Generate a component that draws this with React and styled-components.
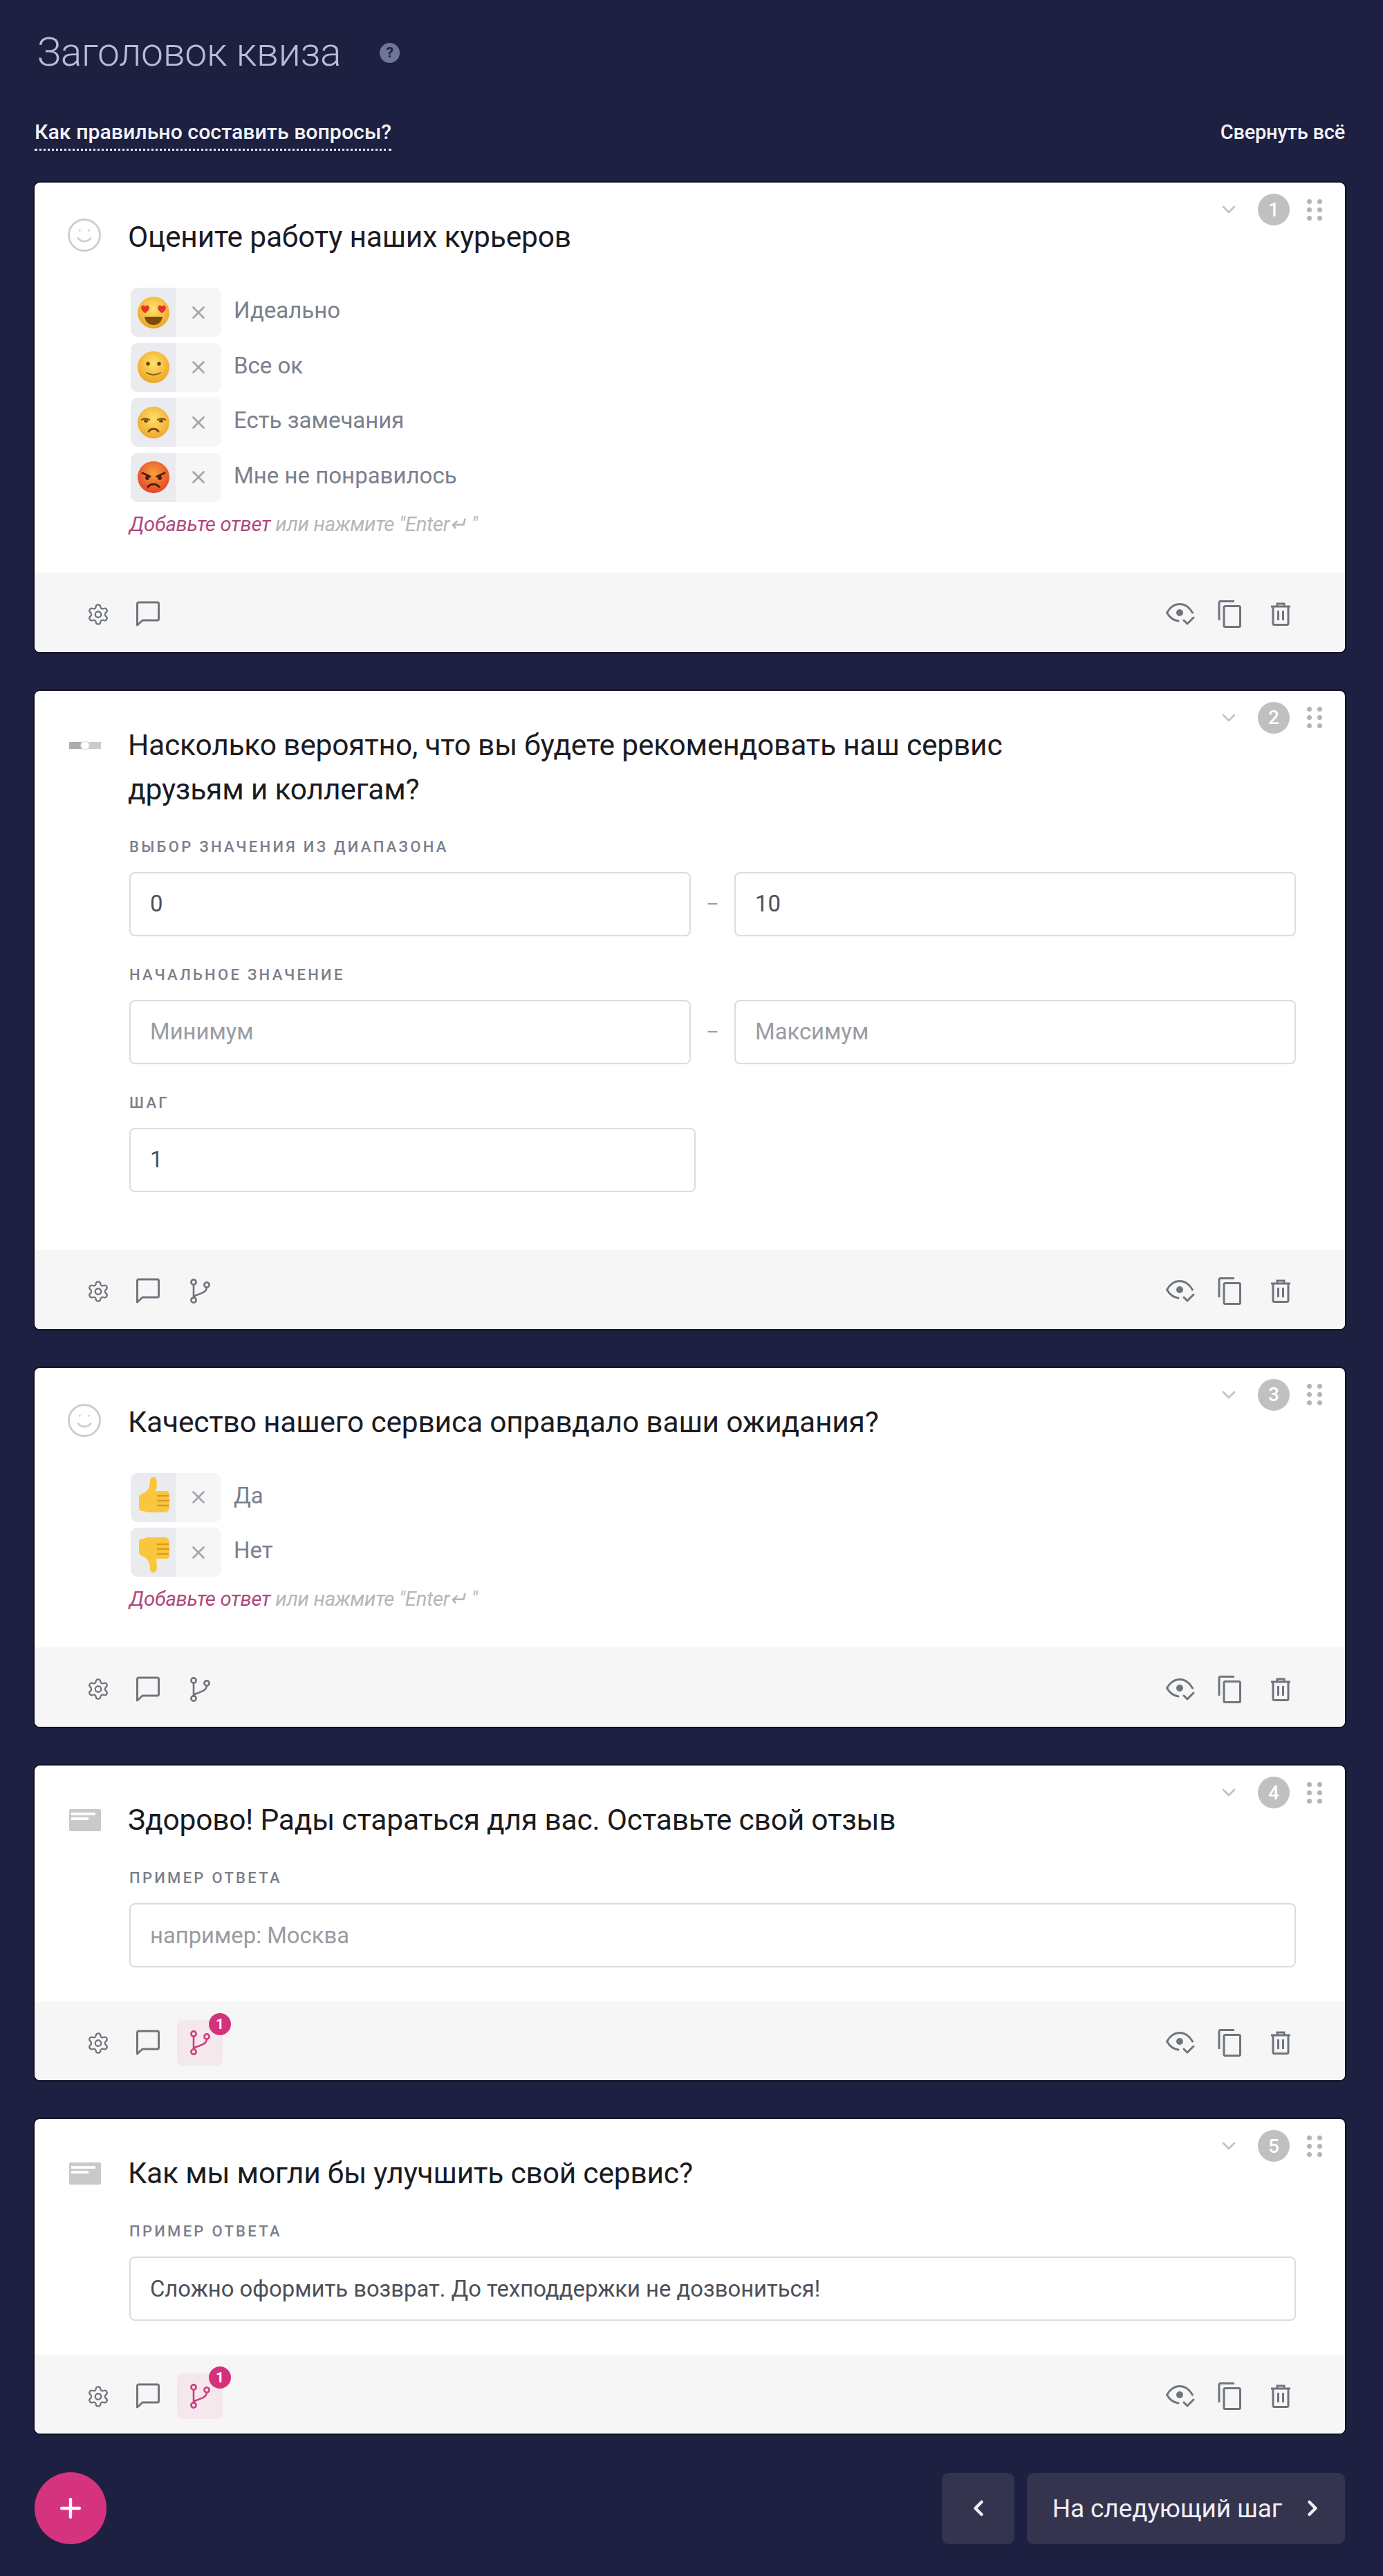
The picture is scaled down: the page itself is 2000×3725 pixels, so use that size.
import React from "react";
import styled, { createGlobalStyle } from "styled-components";
import { Settings, Smile, X, ChevronDown, ChevronLeft, ChevronRight, Plus } from "lucide-react";

const Global = createGlobalStyle`
  html, body { margin: 0; padding: 0; background: #1e2041; }
  * { box-sizing: border-box; }
  body { font-family: Roboto, "Liberation Sans", sans-serif; }
`;

const Page = styled.div`
  width: 2000px; min-height: 3725px; background: #1e2041;
  padding: 44px 55px 45px 50px;
`;
const TitleRow = styled.div`display: flex; align-items: center; height: 64px; padding-left: 4px;`;
const PageTitle = styled.h1`
  margin: 0; font-size: 57px; font-weight: 300; line-height: 64px; color: #b9bcd6; letter-spacing: -0.3px;
`;
const Help = styled.span`
  margin-left: 56px; width: 29px; height: 29px; border-radius: 50%; background: #6f7596; color: #1e2041;
  display: flex; align-items: center; justify-content: center; font-size: 21px; font-weight: 700;
`;
const LinksRow = styled.div`
  display: flex; justify-content: space-between; align-items: flex-start; margin-top: 65px; height: 91px;
`;
const DocLink = styled.a`
  font-size: 30.300px; line-height: 36px; height: 45px; font-weight: 500; color: #f2f2f8; letter-spacing: 0;
  border-bottom: 3px dotted #e6e6ee;
`;
const Collapse = styled.a`
  font-size: 29px; line-height: 36px; font-weight: 500; color: #f2f2f8; letter-spacing: -0.2px;
`;
const Card = styled.section`
  position: relative; background: #fff; border-radius: 8px; margin-bottom: 56px; overflow: visible;
  box-shadow: 0 0 0 2px #0f1024, inset 0 -2px 0 #d9dbe6;
`;
const Controls = styled.div`
  position: absolute; top: 0; right: 0; height: 78px; width: 200px; color: #c2c2c2;
  display: flex; align-items: center; justify-content: flex-end; padding: 0 33px 0 0;
`;
const Num = styled.span`
  width: 46px; height: 46px; border-radius: 50%; background: #c0c0c0; color: #fff; margin: 0 25px 0 26px;
  display: flex; align-items: center; justify-content: center; font-size: 28px; font-weight: 500;
`;
const Dots = styled.span`display: grid; grid-template-columns: 7px 7px; gap: 5px 8px;`;
const Dot = styled.i`width: 7px; height: 7px; border-radius: 50%; background: #b5b5b5;`;
const Body = styled.div`padding: 47px 50px ${p => p.$bottom}px 50px;`;
const Question = styled.div`display: flex; align-items: flex-start;`;
const TypeIcon = styled.span`
  width: 50px; height: 64px; margin-right: 35px; flex: none; display: flex; align-items: center; color: #cfcfcf;
`;
const SmileIcon = styled(Smile)`margin: -6px 0 0 -5px; flex: none; color: #cdcdcd;`;
const QuestionText = styled.h2`
  margin: 0; max-width: 1300px; font-size: 42.5px; line-height: 64px; font-weight: 400; color: #1b1b22; letter-spacing: -0.2px;
`;
const Answers = styled.div`margin: 41px 0 0 89px; display: flex; flex-direction: column; gap: 8.5px;`;
const Answer = styled.div`display: flex; align-items: center;`;
const EmojiCell = styled.span`
  width: 65px; height: 71px; background: #e9ebee; border-radius: 10px 0 0 10px;
  display: flex; align-items: center; justify-content: center;
`;
const RemoveCell = styled.span`
  width: 66px; height: 71px; background: #f6f6f7; border-radius: 0 10px 10px 0; color: #a4a6ad;
  display: flex; align-items: center; justify-content: center;
`;
const AnswerText = styled.span`margin: 0 0 5px 18px; font-size: 33px; line-height: 40px; color: #7c808c;`;
const Hint = styled.div`
  margin: 12px 0 0 87px; font-size: 29.300px; line-height: 40px; font-style: italic; color: #b5b6ba; letter-spacing: -0.3px;
`;
const Add = styled.span`color: #b0487c;`;
const Label = styled.div`
  font-size: 22px; line-height: 30px; font-weight: 500; letter-spacing: 3.3px; color: #7b7f8c; text-transform: uppercase;
  margin: ${p => p.$top}px 0 21px 0;
`;
const Fields = styled.div`margin-left: 87px; padding-right: ${p => p.$right}px;`;
const InputRow = styled.div`display: flex; align-items: center;`;
const Input = styled.div`
  flex: ${p => p.$w ? `0 0 ${p.$w}px` : "1 1 0"}; height: 93px; border: 2px solid #dcdcdc; border-radius: 8px; background: #fff;
  padding: 0 28px; display: flex; align-items: center; font-size: 32.800px; color: ${p => p.$ph ? "#9a9ca3" : "#4d4f59"};
`;
const Dash = styled.span`width: 63px; flex: none; text-align: center; font-size: 28px; color: #9a9ca3;`;
const Footer = styled.footer`
  height: ${p => p.$h}px; background: #f6f6f7; border-radius: 0 0 8px 8px;
  display: flex; align-items: center; justify-content: space-between; padding: 6px 78px 0 75px; color: #6f747e;
`;
const Group = styled.div`display: flex; align-items: center;`;
const Tool = styled.span`
  position: relative; width: ${p => p.$w}px; height: 66px; border-radius: 8px; display: flex; align-items: center; justify-content: center;
  margin-right: ${p => p.$gap || 0}px;
  color: ${p => p.$active ? "#d23c7e" : "inherit"}; background: ${p => p.$active ? "#f4e8ed" : "transparent"};
`;
const Badge = styled.span`
  position: absolute; top: -10px; right: -12px; width: 32px; height: 32px; border-radius: 50%; background: #d5317b; color: #fff;
  display: flex; align-items: center; justify-content: center; font-size: 21px; font-weight: 700;
`;
const Bottom = styled.div`display: flex; align-items: center; justify-content: space-between;`;
const Fab = styled.button`
  width: 104px; height: 104px; border: 0; border-radius: 50%; background: #d6337f; color: #fff; padding: 0;
  display: flex; align-items: center; justify-content: center;
`;
const Nav = styled.div`display: flex; gap: 18px;`;
const NavButton = styled.button`
  height: 103px; width: ${p => p.$w}px; border: 0; border-radius: 10px; background: #35344f; color: #eeeef4;
  padding: 0 0 0 ${p => p.$pad || 0}px;
  display: flex; align-items: center; justify-content: center; gap: 26px; font: 400 37px Roboto, sans-serif; letter-spacing: -0.1px;
`;

const Comment = () => (
  <svg width="36" height="38" viewBox="0 0 36 38" fill="none" stroke="currentColor" strokeWidth="3" strokeLinejoin="round">
    <path d="M2.5 35V4a2 2 0 0 1 2-2h27a2 2 0 0 1 2 2v22a2 2 0 0 1-2 2H10z" />
  </svg>
);
const Branch = () => (
  <svg width="30" height="36" viewBox="0 0 30 36" fill="none" stroke="currentColor" strokeWidth="2.600">
    <circle cx="6" cy="5" r="3.600" />
    <circle cx="6" cy="31" r="3.600" />
    <circle cx="25" cy="9" r="3.600" />
    <path d="M6 8.600v18.800M25 12.600c0 6-5 8-10 9.500-5 1.500-9 2.500-9 5.300" />
  </svg>
);
const EyeCheck = () => (
  <svg width="42" height="34" viewBox="0 0 42 34" fill="none" stroke="currentColor" strokeWidth="3" strokeLinecap="round" strokeLinejoin="round">
    <path d="M18 27C10 26 5 21 1.500 15 6 7 12 2.500 20 2.500S34 7 38.500 15" />
    <circle cx="20" cy="15" r="5" fill="currentColor" stroke="none" />
    <path d="M26 26l5 5 9-9" />
  </svg>
);
const Copy = () => (
  <svg width="34" height="40" viewBox="0 0 34 40" fill="none" stroke="currentColor" strokeWidth="3" strokeLinejoin="round">
    <path d="M2 29V3.500a2 2 0 0 1 2-2h20" />
    <rect x="9" y="8.500" width="23.500" height="30" rx="2" />
  </svg>
);
const Trash = () => (
  <svg width="30" height="34" viewBox="0 0 30 34" fill="none" stroke="currentColor" strokeWidth="3">
    <path d="M1 6h28M10 5V2h10v3" />
    <path d="M4 6v24.500a2 2 0 0 0 2 2h18a2 2 0 0 0 2-2V6" />
    <path d="M11.500 12v14M18.500 12v14" />
  </svg>
);
const CardIcon = () => (
  <svg width="46" height="32" viewBox="0 0 46 32">
    <rect width="46" height="32" rx="2" fill="#c9c9c9" />
    <rect x="3" y="5" width="35" height="4" fill="#fff" />
    <rect x="3" y="12" width="25" height="4" fill="#fff" />
  </svg>
);
const RangeIcon = () => (
  <svg width="46" height="16" viewBox="0 0 46 16">
    <rect y="3" width="18" height="10" fill="#adadad" />
    <rect x="28" y="3" width="18" height="10" fill="#cbcbcb" />
    <circle cx="23" cy="8" r="6" fill="#fff" stroke="#e2e2e2" strokeWidth="1.500" />
  </svg>
);

const Face = ({ id, from = "#ffe36e", to = "#eea422", children }) => (
  <svg width="50" height="50" viewBox="0 0 50 50">
    <defs>
      <radialGradient id={id} cx="50%" cy="38%" r="62%">
        <stop offset="0%" stopColor={from} />
        <stop offset="100%" stopColor={to} />
      </radialGradient>
    </defs>
    <circle cx="25" cy="25" r="23" fill={`url(#${id})`} />
    {children}
  </svg>
);
const Heart = ({ x }) => (
  <path transform={`translate(${x} 14)`} d="M6 12C1 8-1 5 .5 2.500 2-.5 5 0 6 2.500 7 0 10-.5 11.500 2.500 13 5 11 8 6 12z" fill="#e8322f" />
);
const emojis = {
  love: (
    <Face id="e-love"><Heart x={7} /><Heart x={31} />
      <path d="M12 31h26c-1 8-7 12-13 12s-12-4-13-12z" fill="#7a4a12" /></Face>
  ),
  smile: (
    <Face id="e-smile"><circle cx="17" cy="20" r="2.700" fill="#5d4208" /><circle cx="33" cy="20" r="2.700" fill="#5d4208" />
      <path d="M15 33c6 4 14 4 20 0" fill="none" stroke="#8a6310" strokeWidth="2" strokeLinecap="round" /></Face>
  ),
  meh: (
    <Face id="e-meh" from="#ffdf6a" to="#f0a62b">
      <path d="M8 21c3-2 7-2 11 0M31 21c4-2 8-2 11 0" fill="none" stroke="#7c5712" strokeWidth="2.500" strokeLinecap="round" />
      <ellipse cx="14" cy="23" rx="3" ry="1.800" fill="#5a3f0d" /><ellipse cx="36" cy="23" rx="3" ry="1.800" fill="#5a3f0d" />
      <path d="M18 38c3-5 11-5 14 0" fill="none" stroke="#7c4a12" strokeWidth="3" strokeLinecap="round" /></Face>
  ),
  angry: (
    <Face id="e-angry" from="#f8a03c" to="#e2442a">
      <path d="M9 19l11 5M41 19l-11 5" stroke="#4e1c10" strokeWidth="3" strokeLinecap="round" />
      <circle cx="16" cy="26" r="3" fill="#4e1c10" /><circle cx="34" cy="26" r="3" fill="#4e1c10" />
      <path d="M17 39c4-5 12-5 16 0" fill="none" stroke="#4e1c10" strokeWidth="3" strokeLinecap="round" /></Face>
  ),
  up: (
    <svg width="48" height="58" viewBox="0 0 48 58">
      <path d="M3 30c0-4 3-6 7-7 6-3 9-10 9-17 0-4 2-6 5-6 4 0 5 5 5 9 0 5-1 8-2 11h14c4 0 6 2 6 5v18c0 5-3 8-8 8H17c-3 0-5-1-7-2H8c-3 0-5-2-5-5z" fill="#f9c73e" />
      <path d="M30 27h15M30 34h16M30 41h15" stroke="#dc9a1f" strokeWidth="2.500" strokeLinecap="round" />
    </svg>
  ),
  down: (
    <svg width="48" height="58" viewBox="0 0 48 58">
      <path d="M3 28c0 4 3 6 7 7 6 3 9 10 9 17 0 4 2 6 5 6 4 0 5-5 5-9 0-5-1-8-2-11h14c4 0 6-2 6-5V15c0-5-3-8-8-8H17c-3 0-5 1-7 2H8c-3 0-5 2-5 5z" fill="#f9c73e" />
      <path d="M30 17h15M30 24h16M30 31h15" stroke="#dc9a1f" strokeWidth="2.500" strokeLinecap="round" />
    </svg>
  ),
};

const FooterBar = ({ branch, active, h = 115 }) => (
  <Footer $h={h}>
    <Group>
      <Tool $w={34} $gap={37}><Settings size={45} strokeWidth={1.6} /></Tool>
      <Tool $w={36} $gap={branch ? 24 : 0}><Comment /></Tool>
      {branch && (
        <Tool $w={66} $active={active}>
          <Branch />
          {active && <Badge>1</Badge>}
        </Tool>
      )}
    </Group>
    <Group>
      <Tool $w={42} $gap={33}><EyeCheck /></Tool>
      <Tool $w={34} $gap={42}><Copy /></Tool>
      <Tool $w={30}><Trash /></Tool>
    </Group>
  </Footer>
);

const CardControls = ({ n }) => (
  <Controls>
    <ChevronDown size={32} strokeWidth={2} />
    <Num>{n}</Num>
    <Dots>{[0, 1, 2, 3, 4, 5].map(i => <Dot key={i} />)}</Dots>
  </Controls>
);

const AnswerList = ({ items }) => (
  <>
    <Answers>
      {items.map(([e, t]) => (
        <Answer key={t}>
          <EmojiCell>{emojis[e]}</EmojiCell>
          <RemoveCell><X size={30} strokeWidth={2.2} /></RemoveCell>
          <AnswerText>{t}</AnswerText>
        </Answer>
      ))}
    </Answers>
    <Hint><Add>Добавьте ответ</Add> или нажмите "Enter↵ "</Hint>
  </>
);

const TextCard = ({ n, title, value, placeholder }) => (
  <Card>
    <CardControls n={n} />
    <Body $bottom={49}>
      <Question>
        <TypeIcon><CardIcon /></TypeIcon>
        <QuestionText>{title}</QuestionText>
      </Question>
      <Fields $right={21}>
        <Label $top={37}>Пример ответа</Label>
        <InputRow><Input $ph={!value}>{value || placeholder}</Input></InputRow>
      </Fields>
    </Body>
    <FooterBar branch active h={114} />
  </Card>
);

export default function App() {
  return (
    <Page>
      <Global />
      <TitleRow>
        <PageTitle>Заголовок квиза</PageTitle>
        <Help>?</Help>
      </TitleRow>
      <LinksRow>
        <DocLink>Как правильно составить вопросы?</DocLink>
        <Collapse>Свернуть всё</Collapse>
      </LinksRow>

      <Card>
        <CardControls n={1} />
        <Body $bottom={50}>
          <Question>
            <TypeIcon><SmileIcon size={54} strokeWidth={1.25} /></TypeIcon>
            <QuestionText>Оцените работу наших курьеров</QuestionText>
          </Question>
          <AnswerList items={[["love", "Идеально"], ["smile", "Все ок"], ["meh", "Есть замечания"], ["angry", "Мне не понравилось"]]} />
        </Body>
        <FooterBar />
      </Card>

      <Card>
        <CardControls n={2} />
        <Body $bottom={83}>
          <Question>
            <TypeIcon><RangeIcon /></TypeIcon>
            <QuestionText>Насколько вероятно, что вы будете рекомендовать наш сервис друзьям и коллегам?</QuestionText>
          </Question>
          <Fields $right={21}>
            <Label $top={36}>Выбор значения из диапазона</Label>
            <InputRow><Input>0</Input><Dash>–</Dash><Input>10</Input></InputRow>
            <Label $top={41}>Начальное значение</Label>
            <InputRow><Input $ph>Минимум</Input><Dash>–</Dash><Input $ph>Максимум</Input></InputRow>
            <Label $top={41}>Шаг</Label>
            <InputRow><Input $w={819}>1</Input></InputRow>
          </Fields>
        </Body>
        <FooterBar branch />
      </Card>

      <Card>
        <CardControls n={3} />
        <Body $bottom={50}>
          <Question>
            <TypeIcon><SmileIcon size={54} strokeWidth={1.25} /></TypeIcon>
            <QuestionText>Качество нашего сервиса оправдало ваши ожидания?</QuestionText>
          </Question>
          <AnswerList items={[["up", "Да"], ["down", "Нет"]]} />
        </Body>
        <FooterBar branch />
      </Card>

      <TextCard n={4} title="Здорово! Рады стараться для вас. Оставьте свой отзыв" placeholder="например: Москва" />
      <TextCard n={5} title="Как мы могли бы улучшить свой сервис?" value="Сложно оформить возврат. До техподдержки не дозвониться!" />

      <Bottom>
        <Fab><Plus size={44} strokeWidth={2.4} /></Fab>
        <Nav>
          <NavButton $w={105}><ChevronLeft size={36} strokeWidth={3} /></NavButton>
          <NavButton $w={460} $pad={8}>На следующий шаг<ChevronRight size={36} strokeWidth={3} /></NavButton>
        </Nav>
      </Bottom>
    </Page>
  );
}
